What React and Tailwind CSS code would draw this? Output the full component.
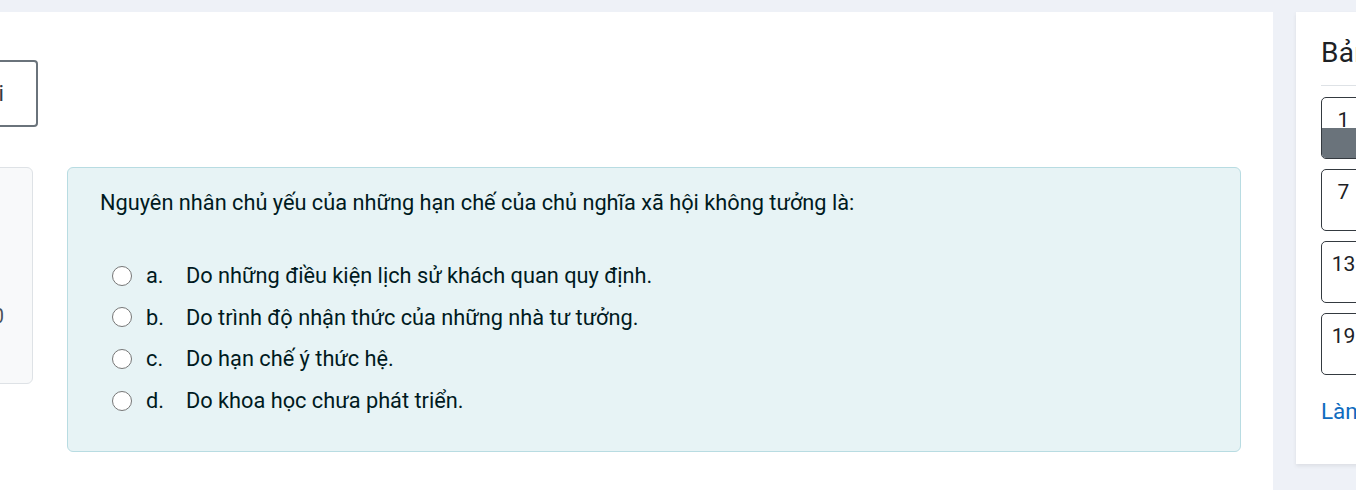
import { useState } from 'react'

const answers = [
  { key: 'a', text: 'Do những điều kiện lịch sử khách quan quy định.' },
  { key: 'b', text: 'Do trình độ nhận thức của những nhà tư tưởng.' },
  { key: 'c', text: 'Do hạn chế ý thức hệ.' },
  { key: 'd', text: 'Do khoa học chưa phát triển.' },
]

const navNumbers = Array.from({ length: 24 }, (_, i) => i + 1)

function Radio({ checked }) {
  return (
    <span className="flex h-[20px] w-[20px] shrink-0 items-center justify-center rounded-full border-[1.5px] border-[#767676] bg-white">
      {checked && <span className="h-[10px] w-[10px] rounded-full bg-[#0f6cbf]" />}
    </span>
  )
}

function QuizNav() {
  return (
    <aside className="ml-[23px] h-[452px] w-[340px] shrink-0 bg-white pl-[25px] pt-[24px] shadow-[0_2px_4px_rgba(0,0,0,0.08)]">
      <h3 className="whitespace-nowrap text-[28px] font-normal leading-[33.6px] tracking-[0.3px] text-[#1d2125]">
        Bảng điều hướng bài kiểm tra
      </h3>
      <hr className="mt-[15px] w-[300px] border-t border-[#dee2e6]" />
      <div className="mt-[11px] grid w-[330px] grid-cols-6 gap-x-[12px] gap-y-[10px]">
        {navNumbers.map((n) => (
          <div
            key={n}
            className="flex h-[62px] w-[45px] flex-col overflow-hidden rounded-[5px] border border-[#343a40] bg-white"
          >
            <span className="h-[30px] pt-[12px] text-center text-[21px] leading-none text-[#1d2125]">{n}</span>
            <span className={n === 1 ? 'flex-1 bg-[#6a737b]' : 'flex-1'} />
          </div>
        ))}
      </div>
      <a href="#" className="mt-[20px] block whitespace-nowrap text-[22.5px] leading-[33.75px] text-[#0f6cbf]">
        Làm xong...
      </a>
    </aside>
  )
}

export default function App() {
  const [picked, setPicked] = useState(null)

  return (
    <div className="flex h-[490px] w-[1356px] overflow-hidden bg-[#eef1f7] pt-[12px] font-['Roboto','Noto_Sans',sans-serif]">
      <main className="flex h-[478px] w-[1273px] shrink-0 flex-col overflow-hidden bg-white pt-[48px]">
        <div className="-ml-[102px] flex h-[67px] w-[140px] shrink-0 items-center justify-end rounded-[4px] border-2 border-[#6a737b] pr-[32px] text-[22.5px] text-[#343a40]">
          Quay lại
        </div>

        <div className="mt-[40px] flex items-start">
          <div className="-ml-[150px] flex h-[217px] w-[183px] shrink-0 flex-col items-end rounded-[6px] border border-[#dee2e6] bg-[#f8f9fa] pr-[28px] pt-[135px] text-[19.5px] leading-[28px] text-[#495057]">
            <span className="whitespace-nowrap">Đạt điểm 1,00</span>
          </div>

          <div className="ml-[34px] w-[1174px] shrink-0 rounded-[6px] border border-[#b8dce2] bg-[#e7f3f5] pb-[29px] pl-[32px] pt-[18px] text-[#001a1e]">
            <p className="text-[21.75px] leading-[33.75px]">
              Nguyên nhân chủ yếu của những hạn chế của chủ nghĩa xã hội không tưởng là:
            </p>
            <div className="mt-[35px] pl-[12px]">
              {answers.map((a) => (
                <label
                  key={a.key}
                  onClick={() => setPicked(a.key)}
                  className="flex cursor-pointer items-center py-[4px] text-[21.75px] leading-[33.75px]"
                >
                  <Radio checked={picked === a.key} />
                  <span className="ml-[14px] w-[40px] shrink-0">{a.key}.</span>
                  <span>{a.text}</span>
                </label>
              ))}
            </div>
          </div>
        </div>
      </main>

      <QuizNav />
    </div>
  )
}
